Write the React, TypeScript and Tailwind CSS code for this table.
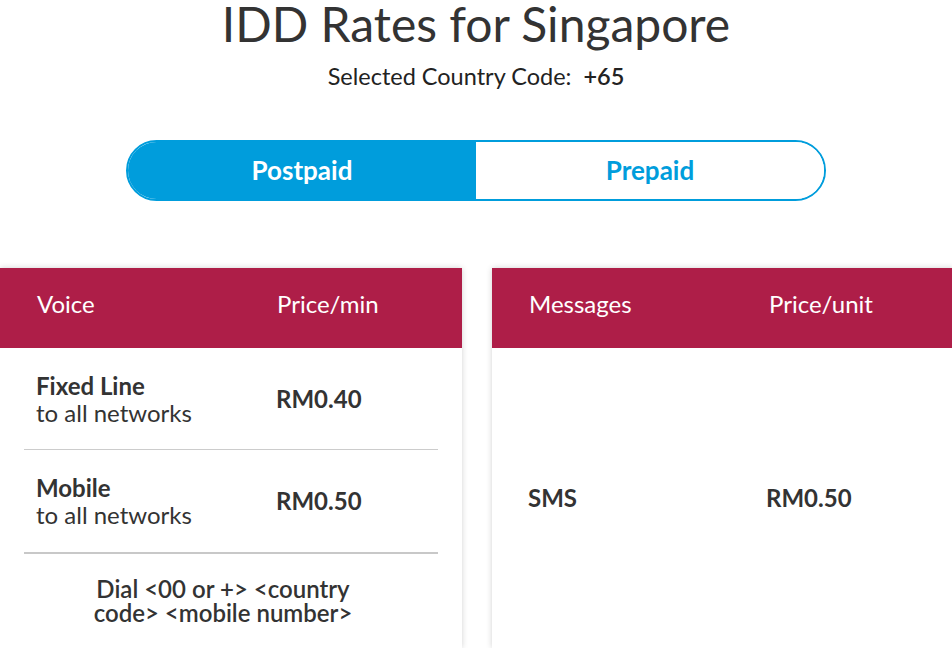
import React, { useState } from 'react';

type Row = { title: string; sub?: string; price: string };

const voiceRows: Row[] = [
  { title: 'Fixed Line', sub: 'to all networks', price: 'RM0.40' },
  { title: 'Mobile', sub: 'to all networks', price: 'RM0.50' },
];

function CardHeader({ left, right }: { left: string; right: string }) {
  return (
    <div className="flex h-[80px] items-center bg-[#ae1e48] pb-[9px] text-[24px] text-white">
      <div className="w-[277px] pl-[37px]">{left}</div>
      <div>{right}</div>
    </div>
  );
}

export default function App() {
  const [plan, setPlan] = useState<'postpaid' | 'prepaid'>('postpaid');

  return (
    <div className="h-[648px] w-full overflow-hidden bg-white font-[Lato,sans-serif] text-[#333]">
      <h1 className="pt-[2px] text-center text-[48px] leading-[56px] font-normal text-[#333] -mt-[6px]">IDD Rates for Singapore</h1>
      <p className="mt-[10px] text-center text-[23.5px] leading-[28px] text-[#222]">
        Selected Country Code:&nbsp; <span className="font-semibold">+65</span>
      </p>

      <div className="mx-auto mt-[50px] flex h-[61px] w-[700px] overflow-hidden rounded-full border-2 border-[#009ddc] text-[26px] font-bold">
        <button
          onClick={() => setPlan('postpaid')}
          className={`flex-1 ${plan === 'postpaid' ? 'bg-[#009ddc] text-white' : 'bg-white text-[#009ddc]'}`}
        >
          Postpaid
        </button>
        <button
          onClick={() => setPlan('prepaid')}
          className={`flex-1 ${plan === 'prepaid' ? 'bg-[#009ddc] text-white' : 'bg-white text-[#009ddc]'}`}
        >
          Prepaid
        </button>
      </div>

      <div className="mt-[67px] flex gap-[30px]">
        {/* voice card */}
        <div className="flex h-[380px] w-[462px] shrink-0 flex-col bg-white shadow-[0_0_6px_rgba(0,0,0,0.18)]">
          <CardHeader left="Voice" right="Price/min" />
          <div className="mx-6 flex flex-1 flex-col">
            {voiceRows.map((r, i) => (
              <div
                key={r.title}
                className={`flex items-center ${i === 0 ? 'h-[102px] border-b border-[#cccccc]' : 'h-[104px] border-b-2 border-[#c8c8c8]'}`}
              >
                <div className="w-[252px] pl-3 text-[24px] leading-[27px]">
                  <div className="font-bold">{r.title}</div>
                  <div>{r.sub}</div>
                </div>
                <div className="text-[24px] font-bold">{r.price}</div>
              </div>
            ))}
            <div className="flex flex-1 items-center justify-center">
              <p className="mr-[16px] w-[270px] text-center text-[24px] leading-[24px] font-semibold">
                Dial &lt;00 or +&gt; &lt;country code&gt; &lt;mobile number&gt;
              </p>
            </div>
          </div>
        </div>

        {/* messages card */}
        <div className="flex h-[380px] w-[462px] shrink-0 flex-col bg-white shadow-[0_0_6px_rgba(0,0,0,0.18)]">
          <CardHeader left="Messages" right="Price/unit" />
          <div className="flex flex-1 items-center text-[24px] font-bold">
            <div className="w-[274px] pl-9">SMS</div>
            <div>RM0.50</div>
          </div>
        </div>
      </div>
    </div>
  );
}
